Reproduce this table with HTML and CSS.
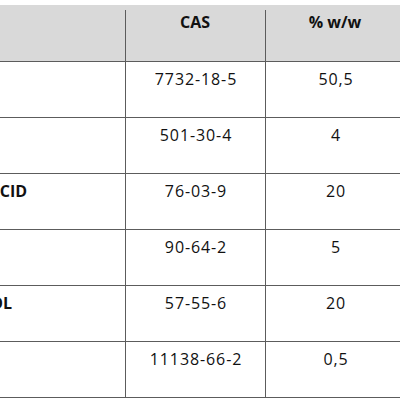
FILE: index.html
```html
<!DOCTYPE html>
<html>
<head>
<meta charset="utf-8">
<link rel="stylesheet" href="styles.css">
</head>
<body>
<div class="frame">
  <div class="table">
    <div class="cell head first">INGREDIENT</div>
    <div class="cell head">CAS</div>
    <div class="cell head">% w/w</div>

    <div class="cell first name">AQUA</div>
    <div class="cell num">7732-18-5</div>
    <div class="cell num">50,5</div>

    <div class="cell first name">KOJIC ACID</div>
    <div class="cell num">501-30-4</div>
    <div class="cell num">4</div>

    <div class="cell first name">TRICHLOROACETIC ACID</div>
    <div class="cell num">76-03-9</div>
    <div class="cell num">20</div>

    <div class="cell first name">MANDELIC ACID</div>
    <div class="cell num">90-64-2</div>
    <div class="cell num">5</div>

    <div class="cell first name">PROPYLENE GLYCOL</div>
    <div class="cell num">57-55-6</div>
    <div class="cell num">20</div>

    <div class="cell first name">XANTHAN GUM</div>
    <div class="cell num">11138-66-2</div>
    <div class="cell num">0,5</div>
  </div>
</div>
</body>
</html>
```

FILE: styles.css
```css
html, body {
  margin: 0;
  padding: 0;
  background: #ffffff;
}

.frame {
  width: 400px;
  height: 400px;
  overflow: hidden;
  padding-top: 5px;
  box-sizing: border-box;
}

.table {
  display: grid;
  grid-template-columns: 386px 140px 140px;
  grid-template-rows: 57px;
  grid-auto-rows: 56px;
  margin-left: -261px;
  width: 666px;
  font-family: "Open Sans", "Liberation Sans", sans-serif;
  font-size: 16px;
  line-height: 22px;
  color: #111111;
}

.cell {
  box-sizing: border-box;
  border-bottom: 1px solid #5c5c5c;
  border-left: 1px solid #5c5c5c;
  padding-top: 6px;
  text-align: center;
  white-space: nowrap;
}

.cell.first {
  border-left: none;
}

.num {
  letter-spacing: 0.9px;
  padding-left: 1px;
}

.head {
  font-weight: 700;
  background: #d9d9d9;
  border-left: none;
}

.head:not(.first) {
  background: linear-gradient(#5c5c5c, #5c5c5c) left 5px / 1px calc(100% - 5px) no-repeat, #d9d9d9;
}

.name {
  font-weight: 700;
}
```
